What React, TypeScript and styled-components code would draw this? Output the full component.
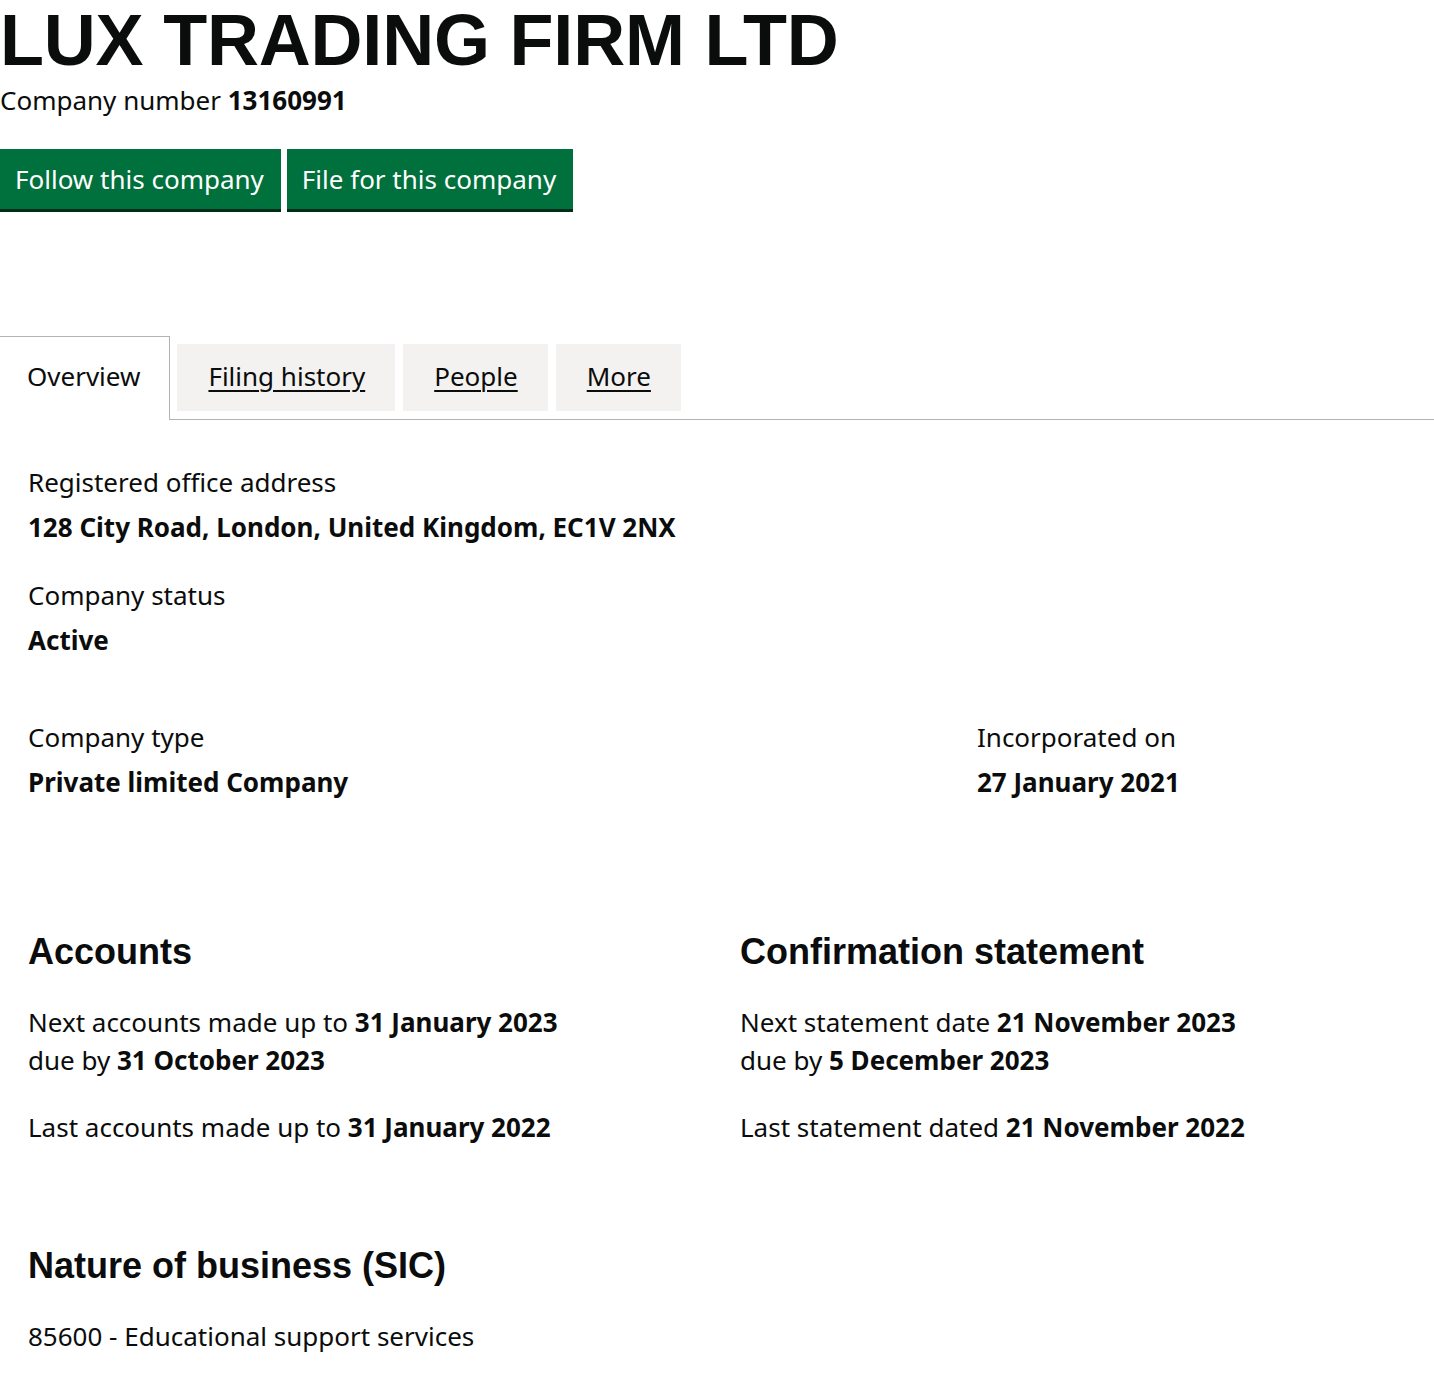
import React from 'react';
import styled, { createGlobalStyle } from 'styled-components';

const palette = {
  text: '#0b0c0c',
  green: '#00703c',
  greenShadow: '#002d18',
  tabGrey: '#f3f2f1',
  border: '#b1b4b6',
};

const GlobalStyle = createGlobalStyle`
  html, body {
    margin: 0;
    padding: 0;
    background: #ffffff;
    overflow-x: hidden;
  }
  body {
    font-family: "Noto Sans", "Liberation Sans", Arial, sans-serif;
    font-size: 26px;
    line-height: 38px;
    color: ${palette.text};
  }
`;

const Page = styled.main`
  width: 1434px;
  padding-bottom: 30px;
`;

const Title = styled.h1`
  margin: 0 0 1px;
  font-family: "Liberation Sans", Arial, sans-serif;
  font-size: 72px;
  line-height: 80px;
  font-weight: 700;
  letter-spacing: -0.2px;
`;

const CompanyNumber = styled.p`
  margin: 0 0 30px;
  strong {
    font-weight: 700;
  }
`;

const ButtonGroup = styled.div`
  display: flex;
  gap: 6px;
  margin-bottom: 127px;
`;

const Button = styled.a`
  display: inline-block;
  padding: 11px 17px 11px 15px;
  background: ${palette.green};
  box-shadow: 0 3px 0 ${palette.greenShadow};
  color: #ffffff;
  text-decoration: none;
  line-height: 38px;
  cursor: pointer;
`;

const TabList = styled.ul`
  display: flex;
  align-items: flex-start;
  margin: 0 0 0 -1px;
  padding: 0;
  list-style: none;
  border-bottom: 1px solid ${palette.border};
`;

const Tab = styled.li<{ $selected?: boolean }>`
  margin: ${(p) => (p.$selected ? '0 7px -1px 0' : '8px 8px 0 0')};
  padding: ${(p) => (p.$selected ? '20px 29px 25px 27px' : '13px 30px 16px 31px')};
  background: ${(p) => (p.$selected ? '#ffffff' : palette.tabGrey)};
  border: ${(p) => (p.$selected ? `1px solid ${palette.border}` : 'none')};
  border-bottom: none;

  a {
    color: ${palette.text};
    text-decoration: ${(p) => (p.$selected ? 'none' : 'underline')};
    text-decoration-thickness: 2px;
    text-underline-offset: 4px;
  }
`;

const Panel = styled.section`
  padding: 43px 0 0 28px;
`;

const Field = styled.div<{ $gap?: number }>`
  margin-bottom: ${(p) => p.$gap ?? 30}px;
`;

const Label = styled.div`
  margin-bottom: 7px;
`;

const Value = styled.div`
  font-weight: 700;
`;

const Columns = styled.div<{ $left: number; $gap?: number }>`
  display: grid;
  grid-template-columns: ${(p) => p.$left}px 1fr;
  margin-bottom: ${(p) => p.$gap ?? 0}px;
`;

const Heading = styled.h2`
  margin: 0 0 31px;
  font-family: "Liberation Sans", Arial, sans-serif;
  font-size: 36px;
  line-height: 40px;
  font-weight: 700;
`;

const Para = styled.p`
  margin: 0 0 29px;
  strong {
    font-weight: 700;
  }
`;

const tabs = [
  { label: 'Overview', selected: true },
  { label: 'Filing history' },
  { label: 'People' },
  { label: 'More' },
];

const App: React.FC = () => (
  <>
    <GlobalStyle />
    <Page>
      <Title>LUX TRADING FIRM LTD</Title>
      <CompanyNumber>
        Company number <strong>13160991</strong>
      </CompanyNumber>

      <ButtonGroup>
        <Button>Follow this company</Button>
        <Button>File for this company</Button>
      </ButtonGroup>

      <TabList>
        {tabs.map((tab) => (
          <Tab key={tab.label} $selected={tab.selected}>
            <a>{tab.label}</a>
          </Tab>
        ))}
      </TabList>

      <Panel>
        <Field>
          <Label>Registered office address</Label>
          <Value>128 City Road, London, United Kingdom, EC1V 2NX</Value>
        </Field>
        <Field $gap={59}>
          <Label>Company status</Label>
          <Value>Active</Value>
        </Field>

        <Columns $left={949} $gap={131}>
          <div>
            <Label>Company type</Label>
            <Value>Private limited Company</Value>
          </div>
          <div>
            <Label>Incorporated on</Label>
            <Value>27 January 2021</Value>
          </div>
        </Columns>

        <Columns $left={712} $gap={71}>
          <div>
            <Heading>Accounts</Heading>
            <Para>
              Next accounts made up to <strong>31 January 2023</strong>
              <br />
              due by <strong>31 October 2023</strong>
            </Para>
            <Para>
              Last accounts made up to <strong>31 January 2022</strong>
            </Para>
          </div>
          <div>
            <Heading>Confirmation statement</Heading>
            <Para>
              Next statement date <strong>21 November 2023</strong>
              <br />
              due by <strong>5 December 2023</strong>
            </Para>
            <Para>
              Last statement dated <strong>21 November 2022</strong>
            </Para>
          </div>
        </Columns>

        <Heading>Nature of business (SIC)</Heading>
        <Para>85600 - Educational support services</Para>
      </Panel>
    </Page>
  </>
);

export default App;
